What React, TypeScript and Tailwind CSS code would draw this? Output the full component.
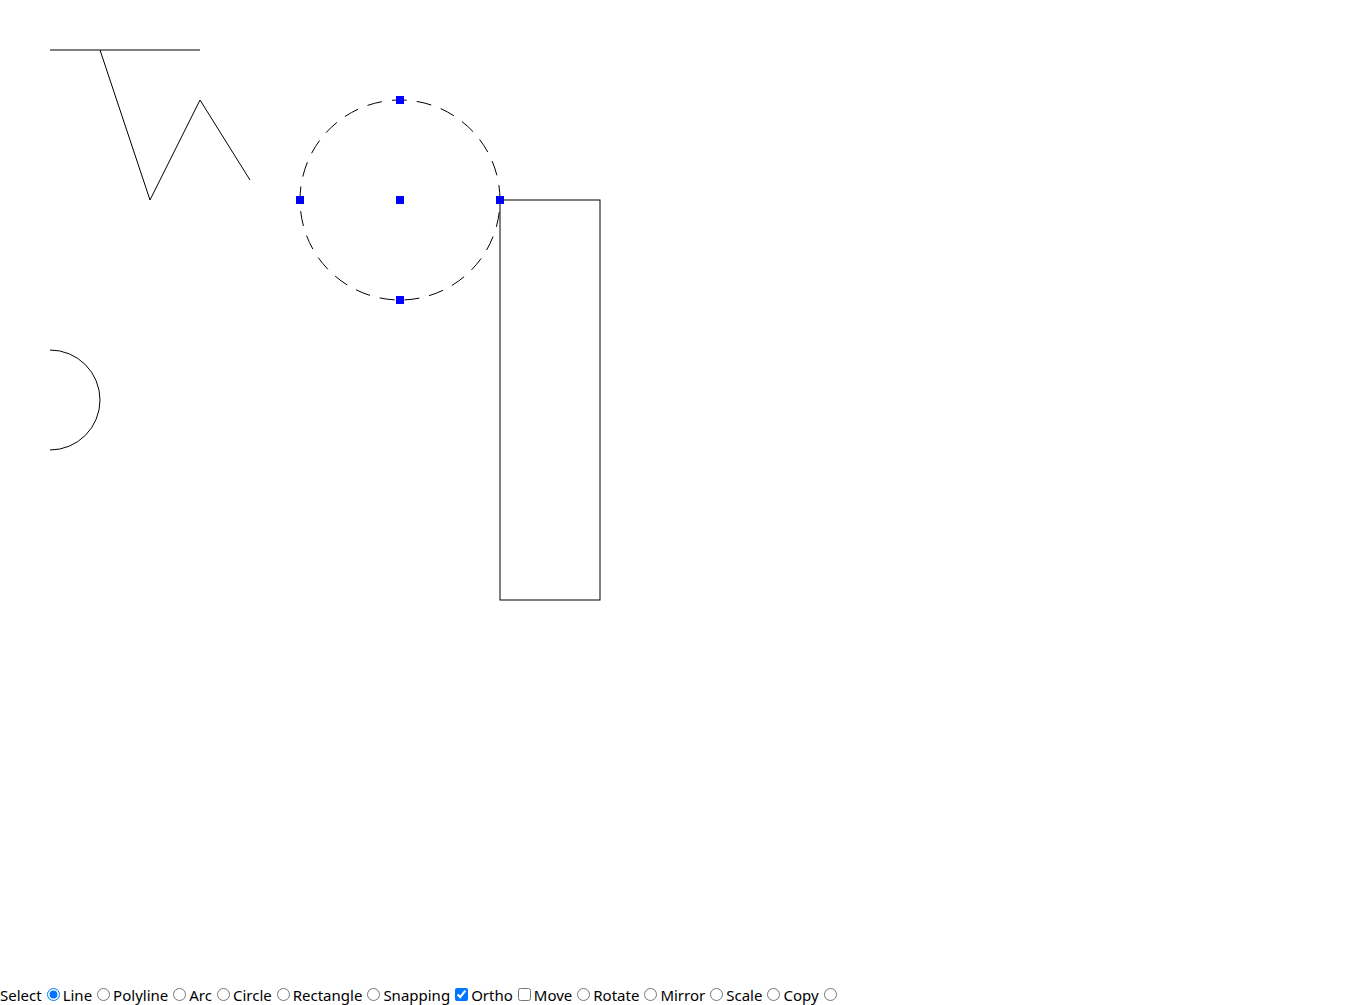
const tools: { label: string; type: "radio" | "checkbox"; checked?: boolean }[] = [
  { label: "Select", type: "radio", checked: true },
  { label: "Line", type: "radio" },
  { label: "Polyline", type: "radio" },
  { label: "Arc", type: "radio" },
  { label: "Circle", type: "radio" },
  { label: "Rectangle", type: "radio" },
  { label: "Snapping", type: "checkbox", checked: true },
  { label: "Ortho", type: "checkbox" },
  { label: "Move", type: "radio" },
  { label: "Rotate", type: "radio" },
  { label: "Mirror", type: "radio" },
  { label: "Scale", type: "radio" },
  { label: "Copy", type: "radio" },
];

const grips = [
  [400, 100],
  [300, 200],
  [400, 200],
  [500, 200],
  [400, 300],
];

const Drawing = () => {
  return (
    <svg className="block w-full h-[985px]" width="1366" height="985">
      <g fill="none" stroke="#000" strokeWidth="1">
        <line x1="50" y1="50" x2="200" y2="50" />
        <polyline points="100,50 150,200 200,100 250,180" />
        <path
          d="M500 200 A100 100 0 1 0 300 200 A100 100 0 1 0 500 200"
          strokeDasharray="15 10"
        />
        <path d="M50 350 A50 50 0 0 1 50 450" />
        <rect x="500" y="200" width="100" height="400" />
      </g>
      {grips.map(([x, y]) => (
        <rect key={`${x}-${y}`} x={x - 4} y={y - 4} width="8" height="8" fill="#0000ff" />
      ))}
    </svg>
  );
};

export default function App() {
  return (
    <div className="bg-white text-black">
      <Drawing />
      <div className="whitespace-nowrap text-[15px] leading-[20px] font-['Noto_Sans',sans-serif]">
        {tools.map((t) => (
          <span key={t.label}>
            {t.label}
            <input
              type={t.type}
              name={t.type === "radio" ? "tool" : undefined}
              defaultChecked={t.checked}
              className="ml-[5px] mr-[3px] mt-[3px]"
            />
          </span>
        ))}
      </div>
    </div>
  );
}
